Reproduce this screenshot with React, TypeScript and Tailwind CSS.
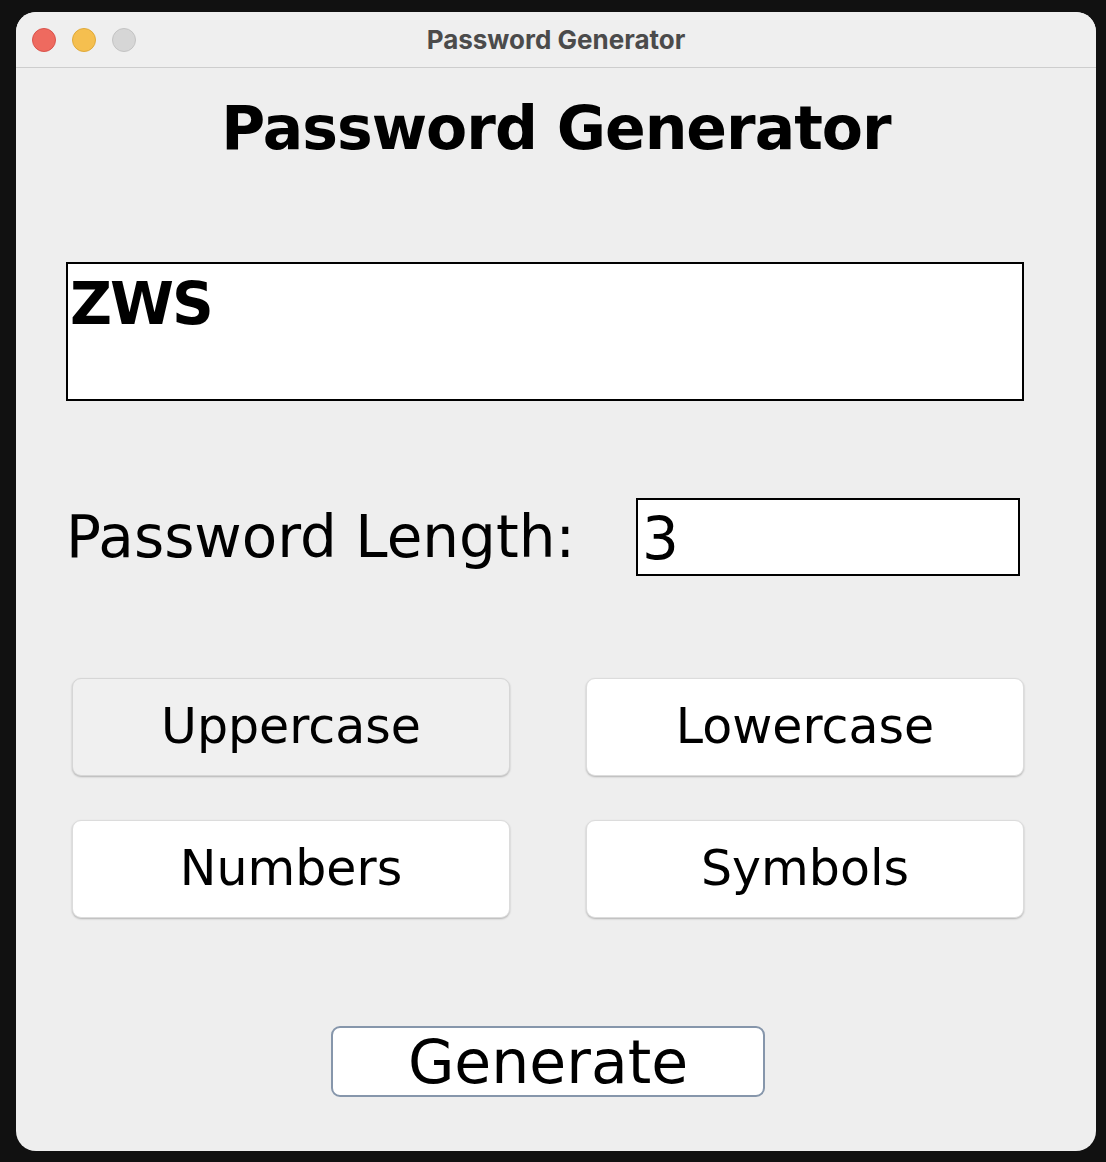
import React from 'react';

const lucida = { fontFamily: '"DejaVu Sans", "Liberation Sans", sans-serif' };

function OptionButton({ label, active = false }: { label: string; active?: boolean }) {
  return (
    <button
      className={
        active
          ? 'h-[98px] w-[438px] rounded-[9px] border border-[#d6d6d6] bg-[#f0f0f0] text-[49px] text-black shadow-[0_1px_2px_rgba(0,0,0,0.25)]'
          : 'h-[98px] w-[438px] rounded-[9px] border border-[#dcdcdc] bg-white text-[49px] text-black shadow-[0_1px_2px_rgba(0,0,0,0.25)]'
      }
      style={lucida}
    >
      {label}
    </button>
  );
}

export default function App() {
  return (
    <div className="h-[1162px] w-[1106px] bg-[#111111] pl-[16px] pt-[12px]">
      <div className="flex h-[1139px] w-[1080px] flex-col overflow-hidden rounded-[20px] bg-[#eeeeee]">
        {/* Title bar */}
        <div className="relative flex h-[56px] shrink-0 items-center border-b border-[#cdcdcd] bg-[#efefef]">
          <div className="flex items-center gap-[16px] pl-[16px]">
            <span className="h-[24px] w-[24px] rounded-full border border-[#d9534c] bg-[#ee6a5f]" />
            <span className="h-[24px] w-[24px] rounded-full border border-[#dfa93a] bg-[#f5bf4f]" />
            <span className="h-[24px] w-[24px] rounded-full border border-[#c3c3c3] bg-[#d6d6d6]" />
          </div>
          <span
            className="absolute left-0 right-0 text-center text-[26px] font-bold text-[#4b4b4b]"
            style={{ fontFamily: 'Inter, "Liberation Sans", sans-serif' }}
          >
            Password Generator
          </span>
        </div>

        {/* Body */}
        <div className="flex flex-col px-[50px]" style={lucida}>
          <h1 className="mt-[20px] text-center text-[60px] font-bold leading-[80px] tracking-[-1px] text-black">
            Password Generator
          </h1>

          <div className="mt-[94px] h-[139px] w-[958px] border-2 border-black bg-white px-[2px]">
            <span className="text-[58px] font-bold leading-[80px] tracking-[-2px] text-black">ZWS</span>
          </div>

          <div className="mt-[97px] flex items-center">
            <span className="w-[570px] text-[58px] leading-[78px] text-black">Password Length:</span>
            <div className="h-[78px] w-[384px] border-2 border-black bg-white px-[4px]">
              <span className="text-[58px] leading-[78px] text-black">3</span>
            </div>
          </div>

          <div className="mt-[102px] grid grid-cols-[438px_438px] gap-x-[76px] gap-y-[44px] pl-[6px]">
            <OptionButton label="Uppercase" active />
            <OptionButton label="Lowercase" />
            <OptionButton label="Numbers" />
            <OptionButton label="Symbols" />
          </div>

          <div className="mt-[108px] flex justify-center">
            <button
              className="ml-[-16px] h-[71px] w-[434px] rounded-[9px] border-2 border-[#8696ab] bg-white text-[60px] leading-[66px] text-black"
              style={lucida}
            >
              Generate
            </button>
          </div>
        </div>
      </div>
    </div>
  );
}
